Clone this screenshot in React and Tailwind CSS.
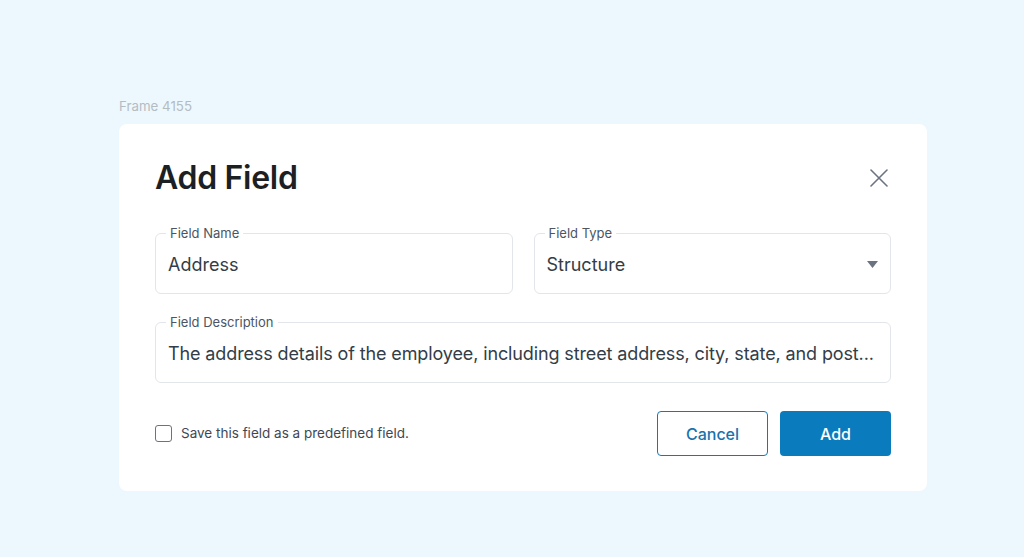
import React, { useState } from 'react';

const CloseIcon = () => (
    <svg width="18" height="18" viewBox="0 0 18 18" fill="none" stroke="#6b7280" strokeWidth="1.6" strokeLinecap="round">
        <path d="M1 1L17 17M17 1L1 17" />
    </svg>
);

const Caret = () => (
    <svg width="11" height="7" viewBox="0 0 11 7" fill="#6b7280">
        <path d="M0 0H11L5.5 7Z" />
    </svg>
);

const Field = ({ label, children }) => (
    <fieldset className="border border-[#e2e5e9] rounded-[6px] min-w-0">
        <legend className="ml-[10px] px-[4px] text-[13px] leading-[16px] text-[#4b5563]">{label}</legend>
        <div className="h-[52px] pb-[6px] pl-[12px] pr-[11px] flex items-center text-[18px] text-[#333d47]">
            {children}
        </div>
    </fieldset>
);

const App = () => {
    const [saved, setSaved] = useState(false);

    return (
        <div className="min-h-screen w-full bg-[#ecf8fd] pt-[97px] px-[119px] font-['Inter',sans-serif]">
            <div className="text-[13.3px] leading-[18px] text-[#b4bcc3] h-[27px]">Frame 4155</div>
            <div className="bg-white rounded-[8px] pt-[34px] pb-[35px] px-[36px] w-[808px]">
                {/* header */}
                <div className="flex items-center justify-between h-[40px]">
                    <h1 className="text-[32px] font-semibold text-[#1c1f23] tracking-[-0.3px]">Add Field</h1>
                    <button className="mr-[3px] p-0">
                        <CloseIcon />
                    </button>
                </div>

                {/* fields */}
                <div className="grid grid-cols-2 gap-x-[21px] mt-[27px]">
                    <Field label="Field Name">Address</Field>
                    <Field label="Field Type">
                        <span className="flex-1">Structure</span>
                        <span className="mr-[1px] flex items-center"><Caret /></span>
                    </Field>
                </div>
                <div className="mt-[20px]">
                    <Field label="Field Description">
                        <span className="whitespace-nowrap tracking-[-0.12px]">The address details of the employee, including street address, city, state, and post...</span>
                    </Field>
                </div>

                {/* footer */}
                <div className="flex items-center justify-between mt-[28px]">
                    <label className="flex items-center gap-[9px] text-[13.5px] text-[#3f4853] cursor-pointer">
                        <span
                            onClick={() => setSaved(!saved)}
                            className={saved ? 'w-[17px] h-[17px] rounded-[3px] border-[1.5px] border-[#0a7bbd] bg-[#0a7bbd]' : 'w-[17px] h-[17px] rounded-[3px] border-[1.5px] border-[#6b7280] bg-white'}
                        />
                        Save this field as a predefined field.
                    </label>
                    <div className="flex gap-[12px]">
                        <button className="w-[111px] h-[45px] rounded-[4px] border border-[#1479b3] text-[#1773ad] text-[16px] font-medium bg-white">
                            Cancel
                        </button>
                        <button className="w-[111px] h-[45px] rounded-[4px] bg-[#0a7bbd] text-white text-[16px] font-medium">
                            Add
                        </button>
                    </div>
                </div>
            </div>
        </div>
    );
};

export default App;
